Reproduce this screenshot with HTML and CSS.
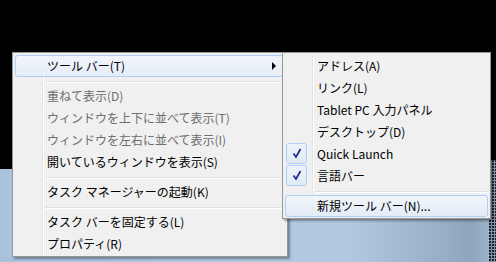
FILE: index.html
```html
<!DOCTYPE html>
<html lang="ja">
<head>
    <meta charset="UTF-8">
    <title>タスク バー メニュー</title>
    <link rel="stylesheet" href="styles.css">
</head>
<body>
    <div class="desktop">
        <div class="grip"></div>

        <div class="menu main-menu">
            <div class="item active">
                <span class="label">ツール バー(T)</span>
                <span class="arrow"></span>
            </div>
            <div class="sep"></div>
            <div class="item disabled"><span class="label">重ねて表示(D)</span></div>
            <div class="item disabled"><span class="label">ウィンドウを上下に並べて表示(T)</span></div>
            <div class="item disabled"><span class="label">ウィンドウを左右に並べて表示(I)</span></div>
            <div class="item"><span class="label">開いているウィンドウを表示(S)</span></div>
            <div class="sep"></div>
            <div class="item"><span class="label">タスク マネージャーの起動(K)</span></div>
            <div class="sep"></div>
            <div class="item"><span class="label">タスク バーを固定する(L)</span></div>
            <div class="item"><span class="label">プロパティ(R)</span></div>
        </div>

        <div class="menu sub-menu">
            <div class="item"><span class="mark"></span><span class="label">アドレス(A)</span></div>
            <div class="item"><span class="mark"></span><span class="label">リンク(L)</span></div>
            <div class="item"><span class="mark"></span><span class="label">Tablet PC 入力パネル</span></div>
            <div class="item"><span class="mark"></span><span class="label">デスクトップ(D)</span></div>
            <div class="item">
                <span class="mark"><span class="check">
                    <svg width="20" height="19" viewBox="0 0 20 19"><path d="M6.5 9.5 L9 13 L13.5 5" fill="none" stroke="#1d2a8a" stroke-width="1.7"/></svg>
                </span></span>
                <span class="label">Quick Launch</span>
            </div>
            <div class="item">
                <span class="mark"><span class="check">
                    <svg width="20" height="19" viewBox="0 0 20 19"><path d="M6.5 9.5 L9 13 L13.5 5" fill="none" stroke="#1d2a8a" stroke-width="1.7"/></svg>
                </span></span>
                <span class="label">言語バー</span>
            </div>
            <div class="sep"></div>
            <div class="item active"><span class="mark"></span><span class="label">新規ツール バー(N)...</span></div>
        </div>
    </div>
</body>
</html>
```

FILE: styles.css
```css
body {
    margin: 0;
    font-family: "Noto Sans CJK JP", "Noto Sans", sans-serif;
    font-size: 12px;
}

.desktop {
    position: relative;
    width: 496px;
    height: 262px;
    overflow: hidden;
    background:
        linear-gradient(to bottom, #000 0, #000 169px, transparent 169px),
        linear-gradient(to right, #a8c2de 0, #afc7e1 40%, #b2c9e1 70%, #98b0c8 88%, #8da5bd 95%, #a2b8cd 100%);
}

.grip {
    position: absolute;
    right: 0;
    top: 160px;
    width: 7px;
    height: 102px;
    background-color: #8394a9;
    background-image: radial-gradient(circle at 1px 1px, #1c222b 1px, transparent 1.4px);
    background-size: 3px 3px;
}

.menu {
    position: absolute;
    box-sizing: border-box;
    border: 1px solid #979797;
    padding: 2px 2px 1px;
    background:
        linear-gradient(to right, transparent 29px, #e2e3e3 29px, #e2e3e3 30px, #fff 30px, #fff 31px, transparent 31px),
        #f0f0f0;
    box-shadow: 2px 2px 2px rgba(0, 0, 0, 0.35);
}

.main-menu {
    left: 12px;
    top: 52px;
    width: 276px;
    height: 205px;
}

.sub-menu {
    left: 282px;
    top: 52px;
    width: 209px;
    height: 167px;
    z-index: 2;
}

.item {
    display: flex;
    align-items: center;
    height: 20px;
    border: 1px solid transparent;
    border-radius: 3px;
    padding-left: 31px;
    padding-right: 8px;
    color: #000;
    white-space: nowrap;
}

.item .label {
    line-height: 20px;
}

.item.active {
    border-color: #aecff7;
    background: linear-gradient(to bottom, rgba(241, 246, 252, 0.85), rgba(226, 236, 248, 0.85));
}

.item.disabled {
    color: #6d6d6d;
}

.arrow {
    margin-left: auto;
    width: 0;
    height: 0;
    border-top: 4px solid transparent;
    border-bottom: 4px solid transparent;
    border-left: 4px solid #000;
}

.sub-menu .item {
    padding-left: 0;
}

.mark {
    display: flex;
    width: 31px;
    height: 20px;
}

.check {
    box-sizing: border-box;
    width: 21px;
    height: 21px;
    margin-top: -1px;
    border: 1px solid #aecff7;
    border-radius: 3px;
    background: linear-gradient(to bottom, #eef3fa, #e0e9f5);
}

.check svg {
    display: block;
}

.sep {
    height: 0;
    margin: 4px 0 2px 30px;
    border-top: 1px solid #e0e0e0;
    border-bottom: 1px solid #fff;
}
```
